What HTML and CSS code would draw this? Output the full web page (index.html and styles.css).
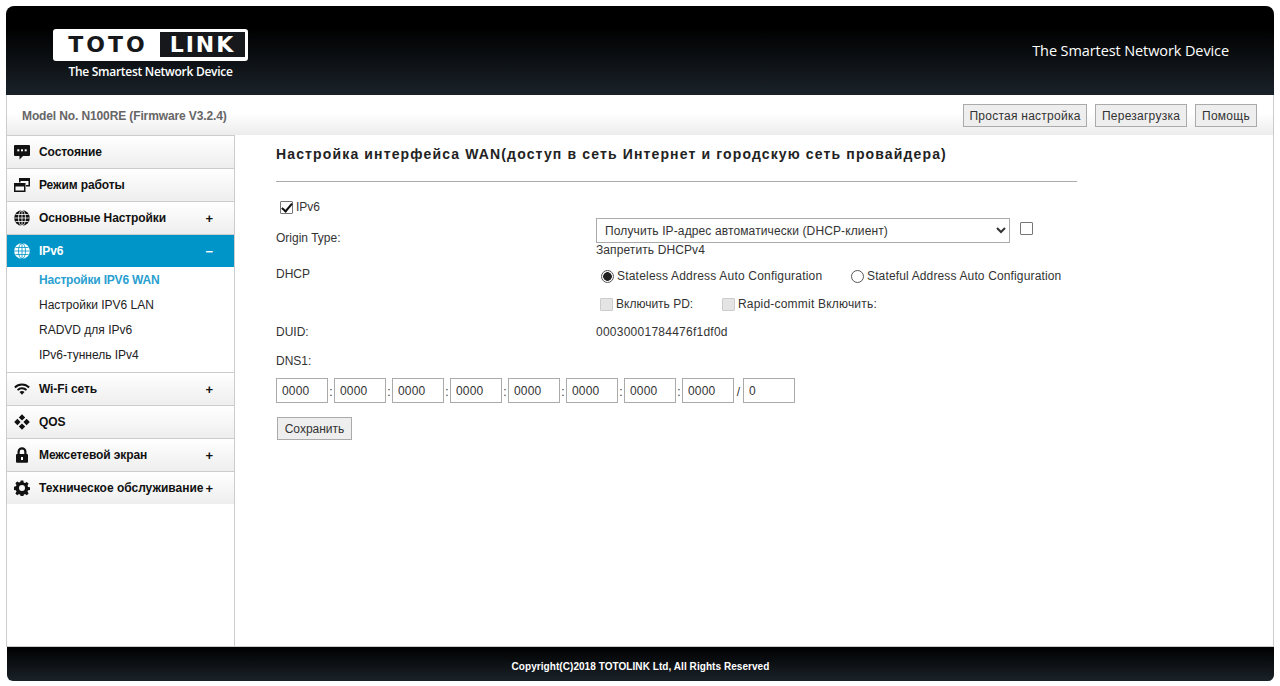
FILE: index.html
```html
<!DOCTYPE html>
<html lang="en">
  <head>
    <meta charset="UTF-8" />
    <meta name="viewport" content="width=device-width, initial-scale=1.0" />
    <title>TOTOLINK N100RE</title>
    <link rel="stylesheet" href="styles.css">
  </head>
  <body>
    <div class="page">
      <div class="top-header">
        <div class="brand">
          <div class="logo"><span class="logo-toto">TOTO</span><span class="logo-link">LINK</span></div>
          <div class="logo-tag">The Smartest Network Device</div>
        </div>
        <div class="header-tag">The Smartest Network Device</div>
      </div>

      <div class="toolbar">
        <span class="model">Model No. N100RE (Firmware V3.2.4)</span>
        <div class="toolbar-btns">
          <button class="btn btn-setup">Простая настройка</button>
          <button class="btn btn-reboot">Перезагрузка</button>
          <button class="btn btn-help">Помощь</button>
        </div>
      </div>

      <div class="main">
        <!-- Side menu -->
        <div class="sidebar">
          <div class="menu-item">
            <svg class="menu-icon" viewBox="0 0 16 16"><path d="M1 1h14a1 1 0 0 1 1 1v9a1 1 0 0 1-1 1H9l-3.500 3.500V12H1a1 1 0 0 1-1-1V2a1 1 0 0 1 1-1z"/><g class="icon-cut"><rect x="3.300" y="5.300" width="2" height="2"/><rect x="7" y="5.300" width="2" height="2"/><rect x="10.700" y="5.300" width="2" height="2"/></g></svg>
            <span>Состояние</span>
          </div>
          <div class="menu-item">
            <svg class="menu-icon" viewBox="0 0 16 16"><path d="M5 1h11v8.500h-4V8h2.500V4H6.500v1.500H5zM0 6h11.500v9H0zm1.500 3.500v4H10v-4z"/></svg>
            <span>Режим работы</span>
          </div>
          <div class="menu-item">
            <svg class="menu-icon" viewBox="0 0 16 16"><circle cx="8" cy="8" r="7.800"/><g class="icon-line"><ellipse cx="8" cy="8" rx="3.500" ry="7.800"/><path d="M8 .2v15.600M.2 8h15.600M1.500 4.500h13M1.500 11.500h13"/></g></svg>
            <span>Основные Настройки</span>
            <span class="menu-sign">+</span>
          </div>
          <div class="menu-item active">
            <svg class="menu-icon" viewBox="0 0 16 16"><circle cx="8" cy="8" r="7.800"/><g class="icon-line"><ellipse cx="8" cy="8" rx="3.500" ry="7.800"/><path d="M8 .2v15.600M.2 8h15.600M1.500 4.500h13M1.500 11.500h13"/></g></svg>
            <span>IPv6</span>
            <span class="menu-sign">&minus;</span>
          </div>
          <div class="submenu">
            <a class="sub-item current">Настройки IPV6 WAN</a>
            <a class="sub-item">Настройки IPV6 LAN</a>
            <a class="sub-item">RADVD для IPv6</a>
            <a class="sub-item">IPv6-туннель IPv4</a>
          </div>
          <div class="menu-item">
            <svg class="menu-icon" viewBox="0 0 16 16"><path d="M8 2.500c3 0 5.800 1.200 7.800 3.300l-1.300 1.400A9 9 0 0 0 8 4.400a9 9 0 0 0-6.500 2.800L.2 5.800A10.800 10.800 0 0 1 8 2.500z"/><path d="M8 6.300c2 0 3.800.8 5.100 2.100l-1.300 1.400A5.400 5.400 0 0 0 8 8.200c-1.500 0-2.800.6-3.800 1.600L2.900 8.400A7.200 7.200 0 0 1 8 6.300z"/><path d="M8 10c1 0 1.900.4 2.500 1L8 13.700 5.500 11c.6-.6 1.500-1 2.500-1z"/></svg>
            <span>Wi-Fi сеть</span>
            <span class="menu-sign">+</span>
          </div>
          <div class="menu-item">
            <svg class="menu-icon" viewBox="0 0 16 16"><path d="M8 .2l3.200 3.200L8 6.600 4.800 3.400zM3.400 4.800L6.600 8l-3.200 3.200L.2 8zM12.600 4.800L15.800 8l-3.200 3.200L9.400 8zM8 9.400l3.200 3.200L8 15.800l-3.200-3.200z"/></svg>
            <span>QOS</span>
          </div>
          <div class="menu-item">
            <svg class="menu-icon" viewBox="0 0 16 16"><path d="M8 .2a4.500 4.500 0 0 1 4.500 4.500v2.300h.5a1 1 0 0 1 1 1v6.800a1 1 0 0 1-1 1H3a1 1 0 0 1-1-1V8a1 1 0 0 1 1-1h.5V4.700A4.500 4.500 0 0 1 8 .2zm0 2.200a2.300 2.300 0 0 0-2.300 2.300V7h4.600V4.700A2.300 2.300 0 0 0 8 2.400z"/><path class="icon-cut" d="M7 10h2v3H7z"/></svg>
            <span>Межсетевой экран</span>
            <span class="menu-sign">+</span>
          </div>
          <div class="menu-item last">
            <svg class="menu-icon" viewBox="0 0 16 16"><path fill-rule="evenodd" d="M6.700.5h2.600l.4 2 1.300.6 1.800-1.100 1.800 1.800-1.100 1.800.6 1.300 2 .4v2.600l-2 .4-.6 1.300 1.100 1.800-1.800 1.800-1.800-1.100-1.300.6-.4 2H6.700l-.4-2-1.300-.6-1.800 1.100-1.800-1.800 1.100-1.800-.6-1.300-2-.4V6.700l2-.4.6-1.300L1.400 3.200l1.800-1.800L5 2.500l1.300-.6zM8 5a3 3 0 1 0 0 6 3 3 0 0 0 0-6z"/></svg>
            <span class="menu-long">Техническое обслуживание</span>
            <span class="menu-sign">+</span>
          </div>
        </div>

        <!-- WAN form -->
        <div class="content">
          <h2 class="page-title">Настройка интерфейса WAN(доступ в сеть Интернет и городскую сеть провайдера)</h2>
          <div class="title-line"></div>

          <label class="ipv6-row"><input type="checkbox" class="check" checked />IPv6</label>

          <div class="form-row origin-row">
            <div class="form-label">Origin Type:</div>
            <div class="form-value">
              <div class="origin-select">
                <select class="select">
                  <option>Получить IP-адрес автоматически (DHCP-клиент)</option>
                </select>
                <input type="checkbox" class="check" />
              </div>
              <div class="origin-note">Запретить DHCPv4</div>
            </div>
          </div>

          <div class="form-row dhcp-row">
            <div class="form-label">DHCP</div>
            <div class="form-value">
              <label class="radio-one"><input type="radio" name="dhcp" class="radio" checked />Stateless Address Auto Configuration</label>
              <label class="radio-two"><input type="radio" name="dhcp" class="radio" />Stateful Address Auto Configuration</label>
            </div>
          </div>

          <div class="form-row pd-row">
            <div class="form-label"></div>
            <div class="form-value">
              <label class="pd-one"><input type="checkbox" class="check" disabled />Включить PD:</label>
              <label><input type="checkbox" class="check" disabled />Rapid-commit Включить:</label>
            </div>
          </div>

          <div class="form-row duid-row">
            <div class="form-label">DUID:</div>
            <div class="form-value duid-value">00030001784476f1df0d</div>
          </div>

          <div class="dns-label">DNS1:</div>
          <div class="dns-row">
            <input class="dns-input" value="0000" /><span class="dns-sep">:</span>
            <input class="dns-input" value="0000" /><span class="dns-sep">:</span>
            <input class="dns-input" value="0000" /><span class="dns-sep">:</span>
            <input class="dns-input" value="0000" /><span class="dns-sep">:</span>
            <input class="dns-input" value="0000" /><span class="dns-sep">:</span>
            <input class="dns-input" value="0000" /><span class="dns-sep">:</span>
            <input class="dns-input" value="0000" /><span class="dns-sep">:</span>
            <input class="dns-input" value="0000" /><span class="dns-sep dns-slash">/</span>
            <input class="dns-input" value="0" />
          </div>

          <button class="btn save-btn">Сохранить</button>
        </div>
      </div>

      <div class="footer">Copyright(C)2018 TOTOLINK Ltd, All Rights Reserved</div>
    </div>
  </body>
</html>
```

FILE: styles.css
```css
html,
body {
  margin: 0;
  height: 100%;
  overflow: hidden;
  background: #fff;
}
body {
  font-family: "Liberation Sans", Arial, sans-serif;
  font-size: 12px;
  color: #333;
}
.page {
  width: 1268px;
  height: 675px;
  margin: 6px 0 0 6px;
  display: flex;
  flex-direction: column;
}

/* Header */
.top-header {
  height: 89px;
  flex: none;
  display: flex;
  justify-content: space-between;
  background: linear-gradient(180deg, #000 0%, #000 25%, #1a2229 100%);
  border-radius: 8px 8px 0 0;
  color: #fff;
}
.brand {
  margin: 23px 0 0 47px;
  width: 195px;
}
.logo {
  display: flex;
  height: 32px;
  box-sizing: border-box;
  background: #fff;
  border-radius: 3px;
  padding: 3px 3px 4px;
  font-family: "DejaVu Sans", sans-serif;
  font-weight: bold;
  font-size: 22px;
  line-height: 25px;
}
.logo-toto {
  width: 104px;
  text-align: center;
  color: #16181b;
  letter-spacing: 3px;
}
.logo-link {
  flex: 1;
  text-align: center;
  color: #fff;
  background: #16181b;
  letter-spacing: 2px;
}
.logo-tag {
  margin-top: 3px;
  font-family: "Open Sans", sans-serif;
  font-weight: 600;
  font-size: 12px;
  letter-spacing: -0.28px;
  line-height: 16px;
  text-align: center;
}
.header-tag {
  margin: 35px 45px 0 0;
  font-family: "Open Sans", sans-serif;
  font-size: 14.5px;
  letter-spacing: -0.1px;
  line-height: 20px;
}

/* Toolbar */
.toolbar {
  height: 40px;
  flex: none;
  box-sizing: border-box;
  display: flex;
  justify-content: space-between;
  align-items: center;
  padding: 1px 16px 0 15px;
  border-left: 1px solid #ccc;
  border-right: 1px solid #ccc;
  background: linear-gradient(180deg, #fff 0%, #fff 45%, #ececec 100%);
}
.model {
  font-weight: bold;
  color: #666;
  letter-spacing: -0.12px;
}
.toolbar-btns {
  display: flex;
  gap: 8px;
}
.btn {
  height: 23px;
  padding: 0;
  background: #eee;
  border: 1px solid #aaa;
  font-family: inherit;
  font-size: 12px;
  letter-spacing: 0.25px;
  color: #333;
}
.btn-setup {
  width: 124px;
}
.btn-reboot {
  width: 92px;
}
.btn-help {
  width: 62px;
}

/* Main area */
.main {
  flex: 1;
  display: flex;
  min-height: 0;
  border-left: 1px solid #ccc;
  border-right: 1px solid #ccc;
  border-bottom: 1px solid #ccc;
  background: #fff;
}
.sidebar {
  width: 228px;
  flex: none;
  box-sizing: border-box;
  border-right: 1px solid #ccc;
  border-top: 1px solid #ccc;
}
.menu-item {
  height: 33px;
  box-sizing: border-box;
  display: flex;
  align-items: center;
  padding: 0 21px 0 7px;
  border-bottom: 1px solid #ccc;
  background: linear-gradient(180deg, #fff 0%, #eee 100%);
  font-weight: bold;
  letter-spacing: -0.1px;
  color: #111;
}
.menu-item.last {
  border-bottom: none;
  height: 32px;
}
.menu-item span:first-of-type {
  margin-left: 9px;
}
.menu-long {
  letter-spacing: 0;
}
.menu-icon {
  width: 16px;
  height: 16px;
  flex: none;
  fill: #111;
}
.icon-cut {
  fill: #fff;
}
.icon-line {
  fill: none;
  stroke: #fff;
  stroke-width: 0.8;
}
.menu-sign {
  margin-left: auto;
  font-size: 13px;
}
.menu-item.active {
  background: #0095c8;
  background-clip: padding-box;
  border-bottom-color: #fff;
  color: #fff;
}
.menu-item.active .menu-icon {
  fill: #fff;
}
.menu-item.active .icon-line {
  stroke: #0095c8;
}
.submenu {
  display: flex;
  flex-direction: column;
  height: 105px;
  box-sizing: border-box;
  border-bottom: 1px solid #ccc;
}
.sub-item {
  height: 25px;
  line-height: 25px;
  padding-left: 32px;
  color: #222;
}
.sub-item.current {
  color: #2a9fd0;
  font-weight: bold;
  letter-spacing: -0.2px;
}

/* Form */
.content {
  flex: 1;
  padding: 0 0 0 41px;
}
.page-title {
  margin: 0;
  padding-top: 11px;
  font-size: 14px;
  line-height: 17px;
  font-weight: bold;
  letter-spacing: 1.14px;
  color: #222;
}
.title-line {
  width: 801px;
  margin-top: 18px;
  border-top: 1px solid #aaa;
}
.check {
  appearance: none;
  position: relative;
  width: 13px;
  height: 13px;
  margin: 0 3px 0 0;
  background: #fff;
  border: 1px solid #767676;
  border-radius: 1px;
  flex: none;
}
.check:checked::after {
  content: "";
  position: absolute;
  left: 3px;
  top: -1px;
  width: 4px;
  height: 9px;
  border: solid #111;
  border-width: 0 2px 2px 0;
  transform: rotate(40deg);
}
.check:disabled {
  background: #e4e4e4;
  border-color: #ccc;
}
.radio {
  appearance: none;
  width: 13px;
  height: 13px;
  margin: 0 3px 0 0;
  border: 1px solid #555;
  border-radius: 50%;
  background: #fff;
  flex: none;
}
.radio:checked {
  background: radial-gradient(circle, #222 0, #222 4px, #fff 4.6px);
}
.ipv6-row {
  display: flex;
  align-items: center;
  height: 14px;
  margin: 18px 0 0 4px;
}
.form-row {
  display: flex;
}
.form-label {
  width: 320px;
  flex: none;
}
.form-value {
  flex: 1;
}
.origin-row {
  margin-top: 4px;
}
.origin-row .form-label {
  padding-top: 13px;
}
.origin-select {
  display: flex;
  align-items: flex-start;
}
.origin-select .check {
  margin: 4px 0 0 10px;
}
.select {
  width: 414px;
  height: 25px;
  padding-left: 4px;
  background: #fff;
  border: 1px solid #aaa;
  font-family: inherit;
  font-size: 12px;
  letter-spacing: 0.12px;
  color: #333;
}
.origin-note {
  line-height: 14px;
  letter-spacing: 0.1px;
}
.dhcp-row {
  margin-top: 10px;
}
.dhcp-row .form-label {
  line-height: 14px;
  padding-top: 0;
}
.dhcp-row .form-value,
.pd-row .form-value {
  display: flex;
  align-items: center;
  letter-spacing: 0.2px;
}
.radio-one,
.radio-two,
.pd-row label {
  display: flex;
  align-items: center;
}
.radio-one {
  margin: 2px 0 0 5px;
  width: 250px;
}
.radio-two {
  margin-top: 2px;
  letter-spacing: 0.14px;
}
.pd-row {
  margin-top: 14px;
}
.pd-row .form-value {
  height: 14px;
}
.pd-one {
  width: 122px;
  margin-left: 4px;
  letter-spacing: 0;
}
.duid-row {
  margin-top: 14px;
  line-height: 14px;
}
.duid-value {
  letter-spacing: 0.25px;
}
.dns-label {
  margin-top: 15px;
  line-height: 14px;
}
.dns-row {
  display: flex;
  align-items: center;
  margin-top: 10px;
}
.dns-input {
  width: 52px;
  height: 25px;
  box-sizing: border-box;
  padding: 0 5px;
  border: 1px solid #aaa;
  font-family: inherit;
  font-size: 12px;
  letter-spacing: 0.2px;
  color: #333;
}
.dns-sep {
  width: 6px;
  text-align: center;
  font-size: 12px;
  padding-top: 2px;
}
.dns-slash {
  width: 9px;
}
.save-btn {
  display: block;
  width: 75px;
  margin: 14px 0 0 1px;
  letter-spacing: 0;
}

/* Footer */
.footer {
  height: 34px;
  flex: none;
  margin-left: 1px;
  background: linear-gradient(180deg, #000 0%, #1a2229 100%);
  border-radius: 0 0 6px 6px;
  color: #fff;
  font-size: 10px;
  font-weight: bold;
  letter-spacing: 0.06px;
  line-height: 40px;
  text-align: center;
}
```
